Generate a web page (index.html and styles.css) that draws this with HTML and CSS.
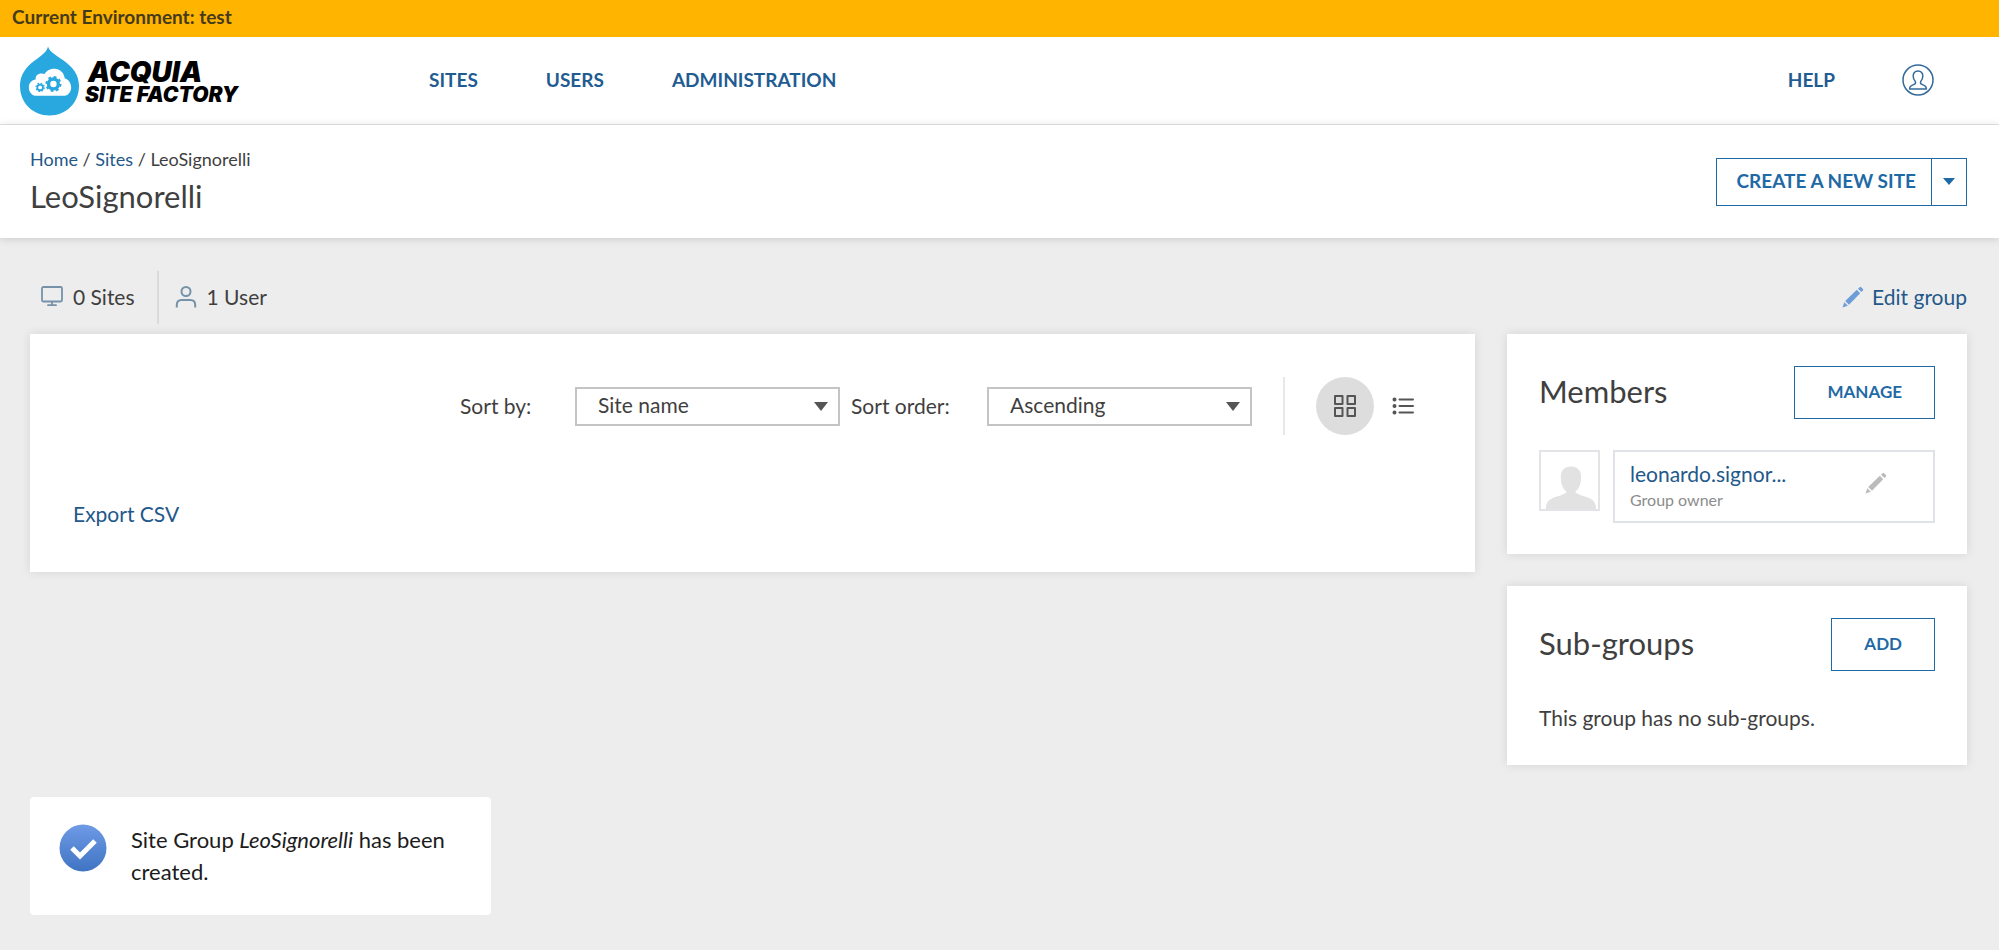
FILE: index.html
```html
<!DOCTYPE html>
<html lang="en">
<head>
<meta charset="utf-8">
<title>LeoSignorelli | Acquia Site Factory</title>
<link rel="stylesheet" href="styles.css">
</head>
<body>
<svg class="sprite" aria-hidden="true">
  <symbol id="pencil" viewBox="0 0 22 22">
    <path d="M0.500 21.500 2.300 16.200 5.800 19.700z"/>
    <path d="M3.200 15 14.800 3.800 18.200 7.200 7 18.800z"/>
    <path d="M16 2.700 17.600 1.200Q18.400 0.400 19.200 1.200L20.900 2.900Q21.700 3.700 20.900 4.500L19.400 6.100z"/>
  </symbol>
</svg>
<div class="environment">Current Environment: test</div>
<header class="topbar">
  <a class="logo" href="#">
    <svg class="logo-drop" viewBox="0 0 60 70" aria-hidden="true">
      <path fill="#29a8e0" d="M28.500 0C30 5 35 8 44 14C54 21 60 29 60 40C60 57 47 70 30 70C13 70 0 57 0 40C0 29 6 21 14 15C22 9 27 6 28.500 0z"/>
      <path fill="#fff" d="M17 50C12 50 9 46 9 41.500C9 37 12 34 16 33.500C15 29 20 26 25 28C27 24 31 22.500 35 22.500C41 22.500 45 27 45.500 32.500C49 33 52 37 52 41.500C52 46 49 50 44 50z"/>
      <circle cx="34" cy="38" r="5" fill="none" stroke="#29a8e0" stroke-width="3.500"/>
      <circle cx="34" cy="38" r="7.200" fill="none" stroke="#29a8e0" stroke-width="2" stroke-dasharray="2.830 2.824"/>
      <circle cx="20.500" cy="41.500" r="2.900" fill="none" stroke="#29a8e0" stroke-width="1.800"/>
      <circle cx="20.500" cy="41.500" r="4.200" fill="none" stroke="#29a8e0" stroke-width="1.200" stroke-dasharray="1.650 1.649"/>
    </svg>
    <span class="logo-text"><span class="logo-name">ACQUIA</span><span class="logo-product">SITE FACTORY</span></span>
  </a>
  <nav class="nav">
    <a href="#">SITES</a>
    <a href="#">USERS</a>
    <a href="#">ADMINISTRATION</a>
  </nav>
  <div class="tools">
    <a href="#">HELP</a>
    <a class="account" href="#" aria-label="My account">
      <svg viewBox="0 0 32 32" fill="none" stroke="#34699a" stroke-width="1.500" stroke-linejoin="round">
        <circle cx="16" cy="16" r="15"/>
        <path d="M16 7C12.800 7 11 9.300 11.200 12.300C11.300 14.800 12.100 16.300 13.300 17.600C14 19.200 13.300 20 11.500 20.600C9 21.500 7.500 22.500 7.600 25H24.400C24.500 22.500 23 21.500 20.500 20.600C18.700 20 18 19.200 18.700 17.600C19.900 16.300 20.700 14.800 20.800 12.300C21 9.300 19.200 7 16 7z"/>
      </svg>
    </a>
  </div>
</header>
<section class="pagehead">
  <div>
    <div class="crumbs"><a href="#">Home</a> / <a href="#">Sites</a> / LeoSignorelli</div>
    <h1>LeoSignorelli</h1>
  </div>
  <div class="split">
    <button type="button" class="split-main">CREATE A NEW SITE</button>
    <button type="button" class="split-more" aria-label="More options"><span class="caret"></span></button>
  </div>
</section>
<main class="page">
  <div class="summary">
    <div class="stat">
      <svg class="icon" viewBox="0 0 22 22" fill="none" stroke="#7592a9" stroke-width="1.800" stroke-linecap="round"><rect x="1" y="1" width="20" height="14.500" rx="1.500"/><path d="M11 16v3M7 19.200h8"/></svg>
      <span>0 Sites</span>
    </div>
    <div class="stat">
      <svg class="icon" viewBox="0 0 22 22" fill="none" stroke="#7592a9" stroke-width="2"><circle cx="11" cy="5.500" r="4.500"/><path d="M1.800 21.500V19Q1.800 14 6.500 14H15.500Q20.200 14 20.200 19V21.500"/></svg>
      <span>1 User</span>
    </div>
    <a class="edit" href="#"><svg class="icon" fill="#6c9dd6"><use href="#pencil"/></svg>Edit group</a>
  </div>
  <div class="columns">
    <section class="card sites">
      <form class="filters">
        <label class="by" for="sort-by">Sort by:</label>
        <div class="select"><select id="sort-by"><option>Site name</option></select></div>
        <label class="order" for="sort-order">Sort order:</label>
        <div class="select"><select id="sort-order"><option>Ascending</option></select></div>
        <div class="views">
          <button type="button" class="view active" aria-label="Grid view">
            <svg class="icon" viewBox="0 0 22 22" fill="none" stroke="#555" stroke-width="2" stroke-linejoin="round"><rect x="1" y="1" width="7.500" height="8"/><rect x="13.500" y="1" width="7.500" height="8"/><rect x="1" y="13" width="7.500" height="8"/><rect x="13.500" y="13" width="7.500" height="8"/></svg>
          </button>
          <button type="button" class="view" aria-label="List view">
            <svg class="icon" viewBox="0 0 22 22" fill="none" stroke="#555" stroke-width="2" stroke-linecap="round"><path d="M7.500 4.500H21M7.500 11H21M7.500 17.500H21"/><path stroke-width="4" d="M2.500 4.500h.01M2.500 11h.01M2.500 17.500h.01"/></svg>
          </button>
        </div>
      </form>
      <a class="export" href="#">Export CSV</a>
    </section>
    <aside class="side">
      <section class="card panel">
        <div class="panel-head"><h2>Members</h2><button type="button">MANAGE</button></div>
        <div class="member">
          <svg class="avatar" viewBox="0 0 59 59" aria-hidden="true"><path fill="#e2e2e2" d="M31 15C24.500 15 20.500 19 20.500 25.500C20.500 33 22.500 38 26.500 41C26 43 24 43.500 20 45C10 48 5 50 5 59H57C57 50 52 48 42 45C38 43.500 36 43 35.500 41C39.500 38 41.500 33 41.500 25.500C41.500 19 37.500 15 31 15z"/></svg>
          <div class="member-box">
            <div><a href="#">leonardo.signor...</a><p>Group owner</p></div>
            <button type="button" class="member-edit" aria-label="Edit member"><svg class="icon" fill="#bbb"><use href="#pencil"/></svg></button>
          </div>
        </div>
      </section>
      <section class="card panel">
        <div class="panel-head"><h2>Sub-groups</h2><button type="button">ADD</button></div>
        <p>This group has no sub-groups.</p>
      </section>
    </aside>
  </div>
  <div class="message" role="status">
    <svg class="check" viewBox="0 0 48 48" aria-hidden="true">
      <defs><linearGradient id="blue" x2="0" y2="1"><stop stop-color="#6f9ae6"/><stop offset="1" stop-color="#3f74c2"/></linearGradient></defs>
      <circle cx="24" cy="24" r="23.500" fill="url(#blue)"/>
      <path fill="none" stroke="#fff" stroke-width="5" d="M13 24 21 32 36 17"/>
    </svg>
    <p>Site Group <em>LeoSignorelli</em> has been created.</p>
  </div>
</main>
</body>
</html>
```
FILE: styles.css
```css
* { box-sizing: border-box; }
body {
  margin: 0;
  min-height: 100vh;
  background: #ededed;
  color: #3f3f3f;
  font: 21px/32px Lato, "Open Sans", sans-serif;
}
h1, h2, p { margin: 0; font-weight: 400; }
a { color: #23588a; text-decoration: none; }
button {
  font: inherit;
  color: #1f6aa5;
  background: #fff;
  border: 1px solid #1f6aa5;
  border-radius: 0;
  padding: 0;
  cursor: pointer;
}
.sprite { display: none; }
.icon { display: block; width: 22px; height: 22px; flex: none; }

.environment {
  height: 37px;
  padding: 0 12px;
  background: #ffb400;
  color: #463a1c;
  font-size: 19px;
  line-height: 34px;
  font-weight: 700;
}
.topbar {
  display: flex;
  align-items: center;
  height: 88px;
  padding: 0 65px 0 20px;
  background: #fff;
  border-bottom: 1px solid #e4e4e4;
}
.topbar a { color: #1f5c92; font-size: 19px; line-height: 30px; font-weight: 700; }
.logo { display: flex; align-items: center; gap: 6px; width: 409px; }
.logo-drop { width: 59px; height: 70px; }
.logo-text { display: flex; flex-direction: column; padding-top: 4px; color: #000; font-family: Inter, Lato, sans-serif; font-style: italic; font-weight: 900; }
.logo-name { font-size: 28px; line-height: 24px; padding-left: 3px; }
.logo-product { font-size: 21px; line-height: 22px; }
.nav { display: flex; gap: 68px; padding-bottom: 2px; }
.tools { display: flex; align-items: center; gap: 67px; margin-left: auto; padding-bottom: 2px; }
.account svg { display: block; width: 32px; height: 32px; }

.pagehead {
  display: flex;
  justify-content: space-between;
  align-items: center;
  height: 113px;
  padding: 0 32px 0 30px;
  background: #fff;
  box-shadow: 0 1px 8px rgba(0, 0, 0, .15);
}
.crumbs { font-size: 18px; line-height: 28px; }
h1 { font-size: 31px; line-height: 46px; }
.split { display: flex; height: 48px; }
.split button { font-size: 19px; font-weight: 700; }
.split .split-main { padding: 0 15px 2px 20px; }
.split .split-more { width: 35px; border-left: 0; }
.caret {
  display: block;
  width: 12px;
  margin: 0 auto;
  border: 6px solid transparent;
  border-top: 7px solid #1f6aa5;
  border-bottom: 0;
}

.page { padding: 33px 32px 36px 30px; }
.summary { display: flex; align-items: center; height: 53px; margin-bottom: 10px; line-height: 30px; }
.stat { display: flex; align-items: center; gap: 10px; height: 53px; padding: 0 22px 2px 11px; }
.stat + .stat { padding-left: 16px; border-left: 2px solid #dadada; }
.edit { display: flex; align-items: center; gap: 8px; margin-left: auto; padding-bottom: 2px; }
.columns { display: grid; grid-template-columns: minmax(0, 1fr) 460px; gap: 32px; align-items: start; }
.card { background: #fff; box-shadow: 0 0 10px rgba(0, 0, 0, .1); }

.sites { padding: 42px 43px; }
.filters { display: flex; align-items: center; justify-content: flex-end; height: 60px; }
.by { width: 115px; }
.order { width: 136px; margin-left: 11px; }
.select { position: relative; width: 265px; }
.select::after {
  content: "";
  position: absolute;
  right: 12px;
  top: 15px;
  border: 7px solid transparent;
  border-top: 9px solid #555;
  border-bottom: 0;
  pointer-events: none;
}
select {
  display: block;
  appearance: none;
  width: 100%;
  height: 39px;
  padding: 0 32px 2px 21px;
  border: 2px solid #c4c4c4;
  border-radius: 0;
  background: #fff;
  color: inherit;
  font: inherit;
}
.views { display: flex; align-items: center; height: 58px; margin-left: 31px; padding-left: 31px; border-left: 2px solid #e8e8e8; }
.view { display: grid; place-items: center; width: 58px; height: 58px; border: 0; border-radius: 50%; }
.view.active { background: #ddd; }
.export { display: inline-block; margin-top: 62px; }

.side { display: grid; gap: 32px; }
.panel { padding: 32px 32px 31px; }
.panel-head { display: flex; align-items: center; justify-content: space-between; margin-bottom: 31px; }
h2 { font-size: 31px; line-height: 40px; padding-bottom: 4px; }
.panel-head button { height: 53px; padding: 0 32px 2px; font-size: 17px; font-weight: 700; }
.member { display: flex; align-items: flex-start; gap: 13px; }
.avatar { width: 61px; height: 61px; border: 2px solid #e2e4e8; flex: none; }
.member-box {
  display: flex;
  align-items: flex-start;
  justify-content: space-between;
  flex: 1;
  height: 73px;
  padding: 8px 46px 0 15px;
  border: 2px solid #dfe2e6;
}
.member-box a { display: block; line-height: 28px; }
.member-box p { color: #8c8c8c; font-size: 16px; line-height: 24px; }
.member-edit { margin-top: 12px; border: 0; }

.message {
  display: flex;
  align-items: flex-start;
  gap: 24px;
  width: 461px;
  margin-top: 32px;
  padding: 27px 28px 27px 29px;
  background: #fff;
  border-radius: 4px;
  color: #1c1c1c;
  font-size: 22px;
}
.check { width: 48px; height: 48px; flex: none; }
```
